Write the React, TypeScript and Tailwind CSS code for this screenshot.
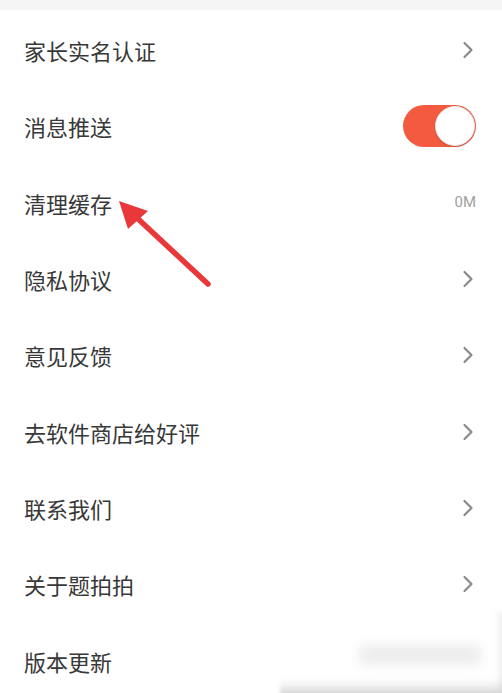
import React from "react";

const Chevron = () => (
  <svg width="12" height="18" viewBox="0 0 12 18" fill="none">
    <path d="M2.5 2 L9.5 9 L2.5 16" stroke="#8a8a8a" strokeWidth="2.2" strokeLinecap="round" strokeLinejoin="round" />
  </svg>
);

const Toggle = () => (
  <div className="relative w-[73px] h-[42px] rounded-full bg-[#f45a40]">
    <div className="absolute right-[1px] top-[1px] w-[40px] h-[40px] rounded-full bg-white border border-[#e8e8e8] shadow-[0_1px_2px_rgba(0,0,0,0.15)]" />
  </div>
);

type Row = { label: string; right: "chevron" | "toggle" | "text" | "none"; value?: string };

const rows: Row[] = [
  { label: "家长实名认证", right: "chevron" },
  { label: "消息推送", right: "toggle" },
  { label: "清理缓存", right: "text", value: "0M" },
  { label: "隐私协议", right: "chevron" },
  { label: "意见反馈", right: "chevron" },
  { label: "去软件商店给好评", right: "chevron" },
  { label: "联系我们", right: "chevron" },
  { label: "关于题拍拍", right: "chevron" },
  { label: "版本更新", right: "none" },
];

export default function App() {
  return (
    <div
      className="relative w-[502px] h-[693px] overflow-hidden bg-white"
      style={{ fontFamily: '"Noto Sans CJK SC", "Noto Sans", sans-serif' }}
    >
      <div className="h-[10px] bg-[#f5f5f5]" />
      <div className="pt-[2px]">
        {rows.map((r) => (
          <div key={r.label} className="h-[76.3px] flex items-center justify-between pl-[24px] pr-[28px]">
            <span className="text-[22px] leading-none text-[#383838]">{r.label}</span>
            {r.right === "chevron" && <Chevron />}
            {r.right === "toggle" && (
              <div className="-mr-[2px]">
                <Toggle />
              </div>
            )}
            {r.right === "text" && (
              <span className="text-[15px] text-[#a0a0a0] mr-[-2px]" style={{ fontFamily: '"Roboto", sans-serif' }}>
                {r.value}
              </span>
            )}
          </div>
        ))}
      </div>

      {/* red arrow annotation */}
      <svg className="absolute left-0 top-0 pointer-events-none" width="502" height="693" viewBox="0 0 502 693">
        <line x1="208" y1="284" x2="136" y2="217" stroke="#e8383a" strokeWidth="5.5" strokeLinecap="round" />
        <polygon points="119,201 148,211 128,229" fill="#e8383a" />
      </svg>

      {/* blurred overlay bottom right */}
      <div className="absolute left-[280px] top-[612px] w-[240px] h-[100px] bg-white blur-[2px] shadow-[inset_-14px_-22px_14px_rgba(0,0,0,0.22)]" />
      <div className="absolute left-[360px] top-[645px] w-[120px] h-[20px] bg-[#ececec] blur-[6px]" />
    </div>
  );
}
